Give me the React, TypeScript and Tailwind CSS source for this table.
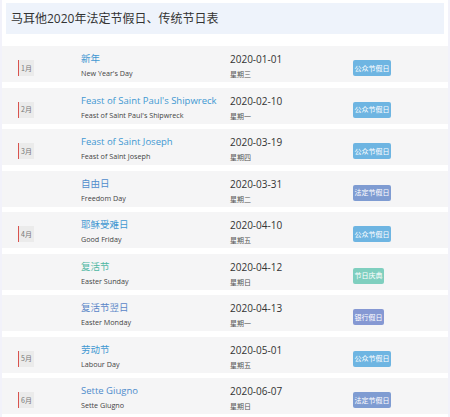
import React from 'react';

type Holiday = {
  month?: string;
  name: string;
  en: string;
  date: string;
  weekday: string;
  kind: 'public' | 'legal' | 'festival' | 'bank';
};

const holidays: Holiday[] = [
  { month: '1月', name: '新年', en: "New Year's Day", date: '2020-01-01', weekday: '星期三', kind: 'public' },
  { month: '2月', name: "Feast of Saint Paul's Shipwreck", en: "Feast of Saint Paul's Shipwreck", date: '2020-02-10', weekday: '星期一', kind: 'public' },
  { month: '3月', name: 'Feast of Saint Joseph', en: 'Feast of Saint Joseph', date: '2020-03-19', weekday: '星期四', kind: 'public' },
  { name: '自由日', en: 'Freedom Day', date: '2020-03-31', weekday: '星期二', kind: 'legal' },
  { month: '4月', name: '耶稣受难日', en: 'Good Friday', date: '2020-04-10', weekday: '星期五', kind: 'public' },
  { name: '复活节', en: 'Easter Sunday', date: '2020-04-12', weekday: '星期日', kind: 'festival' },
  { name: '复活节翌日', en: 'Easter Monday', date: '2020-04-13', weekday: '星期一', kind: 'bank' },
  { month: '5月', name: '劳动节', en: 'Labour Day', date: '2020-05-01', weekday: '星期五', kind: 'public' },
  { month: '6月', name: 'Sette Giugno', en: 'Sette Giugno', date: '2020-06-07', weekday: '星期日', kind: 'legal' },
];

const kindStyle = {
  public: { label: '公众节假日', badge: 'bg-[#6eb5e2] w-[38px]', title: 'text-[#3f98d2]' },
  legal: { label: '法定节假日', badge: 'bg-[#7f9cd2] w-[38px]', title: 'text-[#4f8ccc]' },
  festival: { label: '节日庆典', badge: 'bg-[#7fcfbf] w-[31px]', title: 'text-[#4fb8a4]' },
  bank: { label: '银行假日', badge: 'bg-[#8598d3] w-[31px]', title: 'text-[#5a86c8]' },
};

const cjk = { fontFamily: '"Noto Sans CJK SC", sans-serif' };

const HolidayRow: React.FC<{ item: Holiday }> = ({ item }) => {
  const style = kindStyle[item.kind];
  return (
    <div className="h-[36px] bg-[#f5f5f6] flex items-start">
      <div className="w-[79px] pl-[16px] pt-[14px] shrink-0">
        {item.month && (
          <div
            className="w-[16px] h-[16px] bg-[#ebebeb] border-l border-[#d9534f] flex items-center justify-center text-[7px] text-[#777]"
            style={cjk}
          >
            {item.month}
          </div>
        )}
      </div>
      <div className="w-[149px] shrink-0 pt-[6px]">
        <div className={`text-[9.5px] leading-[14px] whitespace-nowrap ${style.title}`}>{item.name}</div>
        <div className="text-[7.2px] leading-[12px] mt-[1px] text-[#444] whitespace-nowrap">{item.en}</div>
      </div>
      <div className="w-[123px] shrink-0 pt-[6px]">
        <div className="text-[10px] leading-[14px] text-[#333]">{item.date}</div>
        <div className="text-[7px] leading-[12px] mt-[2px] text-[#555]" style={cjk}>{item.weekday}</div>
      </div>
      <div className="pt-[14px]">
        <div
          className={`h-[16px] rounded-[2px] flex items-center justify-center text-[7px] text-white ${style.badge}`}
          style={cjk}
        >
          {style.label}
        </div>
      </div>
    </div>
  );
};

export default function App() {
  return (
    <div
      className="w-[450px] h-[417px] bg-[#f2f2fa] px-[2px] overflow-hidden"
      style={{ fontFamily: '"Open Sans", "Noto Sans CJK SC", sans-serif' }}
    >
      <div className="bg-white h-full pt-[3px]">
        <div className="mx-[4px] h-[31px] bg-[#eef3fb] flex items-center pl-[5px] text-[12px] text-[#333]">
          马耳他2020年法定节假日、传统节日表
        </div>
        <div className="mt-[12px] flex flex-col gap-[5.5px]">
          {holidays.map((h, i) => (
            <HolidayRow key={i} item={h} />
          ))}
        </div>
      </div>
    </div>
  );
}
